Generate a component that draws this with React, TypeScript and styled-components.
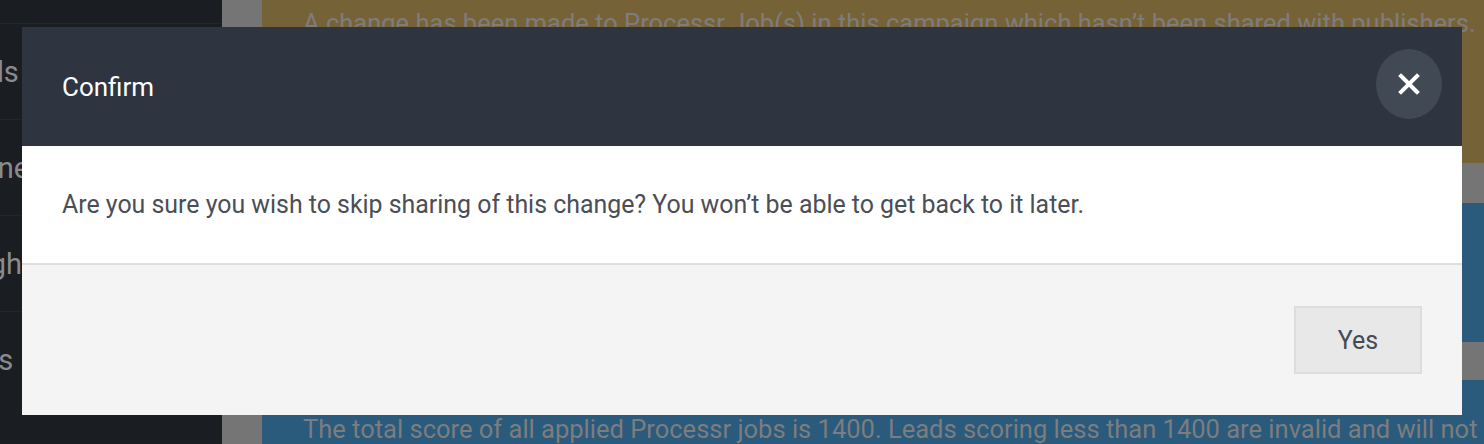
import React from 'react'
import styled, { createGlobalStyle } from 'styled-components'

const GlobalStyle = createGlobalStyle`
  html, body {
    margin: 0;
    padding: 0;
    overflow: hidden;
    background: #191c21;
    font-family: Roboto, "Liberation Sans", sans-serif;
  }
`

const Page = styled.div`
  display: flex;
  width: 1484px;
  height: 444px;
  overflow: hidden;
`

const Sidebar = styled.nav`
  width: 222px;
  flex-shrink: 0;
  background: #1a1d22;
  overflow: hidden;
  padding-top: 23px;
`

const NavItem = styled.div`
  height: 96px;
  border-top: 1px solid #23262c;
  display: flex;
  align-items: center;
  margin-left: -58px;
  color: #8a8b8d;
  font-size: 29px;
  white-space: nowrap;
  box-sizing: border-box;
`

const Gutter = styled.div`
  width: 40px;
  flex-shrink: 0;
  background: #757575;
`

const Content = styled.main`
  flex: 1;
  display: flex;
  flex-direction: column;
  overflow: hidden;
`

const Band = styled.section<{ $tone: 'warn' | 'info' | 'gap'; $h?: number }>`
  background: ${p => (p.$tone === 'warn' ? '#766237' : p.$tone === 'info' ? '#2a5a7c' : '#757575')};
  height: ${p => (p.$h ? `${p.$h}px` : 'auto')};
  flex: ${p => (p.$h ? 'none' : '1')};
  padding: 0 0 0 41px;
  color: #7d7d7d;
  font-size: 25.5px;
  line-height: 30px;
  white-space: nowrap;
  box-sizing: border-box;
`

const BandText = styled.p<{ $top: number }>`
  margin: 0;
  padding-top: ${p => p.$top}px;
`

const Overlay = styled.div`
  position: fixed;
  inset: 0;
  display: flex;
  justify-content: flex-start;
  align-items: flex-start;
  padding: 27px 0 0 22px;
`

const Dialog = styled.div`
  width: 1440px;
  height: 388px;
  display: flex;
  flex-direction: column;
  background: #f4f4f4;
`

const Header = styled.header`
  height: 119px;
  flex-shrink: 0;
  background: #2e3440;
  display: flex;
  align-items: center;
  justify-content: space-between;
  padding: 0 20px 0 40px;
  box-sizing: border-box;
`

const Title = styled.h2`
  margin: 0;
  color: #ffffff;
  font-size: 26px;
  font-weight: 400;
  padding-top: 1px;
`

const CloseBtn = styled.button`
  width: 66px;
  height: 70px;
  border-radius: 50%;
  border: none;
  background: #414955;
  display: flex;
  align-items: center;
  justify-content: center;
  padding: 0;
  margin-top: -5px;
  cursor: pointer;
`

const Body = styled.div`
  height: 119px;
  flex-shrink: 0;
  background: #ffffff;
  border-bottom: 2px solid #dedede;
  display: flex;
  align-items: center;
  padding: 0 40px;
  color: #4b4e56;
  font-size: 24.9px;
  box-sizing: border-box;
`

const Footer = styled.footer`
  flex: 1;
  display: flex;
  justify-content: flex-end;
  align-items: flex-start;
  padding: 41px 40px 0;
`

const YesBtn = styled.button`
  width: 128px;
  height: 68px;
  background: #e8e8e8;
  border: 2px solid #dcdcdc;
  color: #454a55;
  font-family: Roboto, "Liberation Sans", sans-serif;
  font-size: 25px;
  cursor: pointer;
`

const navLabels = ['Fields', 'Engine', 'Weight', 'Rules']

const App = () => {
  return (
    <>
      <GlobalStyle />
      <Page>
        <Sidebar>
          {navLabels.map(label => (
            <NavItem key={label}>{label}</NavItem>
          ))}
        </Sidebar>
        <Gutter />
        <Content>
          <Band $tone="warn" $h={163}>
            <BandText $top={8}>
              A change has been made to Processr Job(s) in this campaign which hasn’t been shared with publishers.
            </BandText>
          </Band>
          <Band $tone="gap" $h={40} />
          <Band $tone="info" $h={139} />
          <Band $tone="gap" $h={38} />
          <Band $tone="info">
            <BandText $top={34}>
              The total score of all applied Processr jobs is 1400. Leads scoring less than 1400 are invalid and will not be accepted.
            </BandText>
          </Band>
        </Content>
      </Page>
      <Overlay>
        <Dialog role="dialog">
          <Header>
            <Title>Confirm</Title>
            <CloseBtn aria-label="Close">
              <svg width="22" height="22" viewBox="0 0 22 22">
                <path d="M3 3 L19 19 M19 3 L3 19" stroke="#ffffff" strokeWidth="4" strokeLinecap="square" />
              </svg>
            </CloseBtn>
          </Header>
          <Body>
            Are you sure you wish to skip sharing of this change? You won’t be able to get back to it later.
          </Body>
          <Footer>
            <YesBtn>Yes</YesBtn>
          </Footer>
        </Dialog>
      </Overlay>
    </>
  )
}

export default App
